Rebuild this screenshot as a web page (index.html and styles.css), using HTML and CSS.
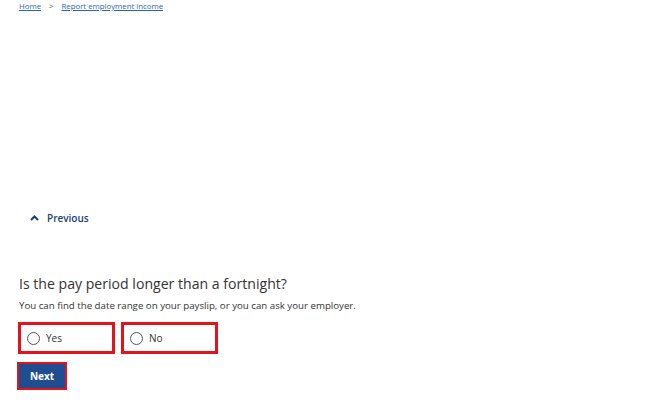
FILE: index.html
```html
<!DOCTYPE html>
<html lang="en">

<head>
    <meta charset="UTF-8">
    <meta name="viewport" content="width=device-width, initial-scale=1.0">
    <title>Report employment income</title>
    <link rel="stylesheet" href="styles.css">
</head>

<body>
    <nav class="crumbs">
        <a href="#">Home</a>
        <span class="sep">&gt;</span>
        <a href="#">Report employment income</a>
    </nav>

    <div class="prev">
        <svg width="9" height="6" viewBox="0 0 9 6"><path d="M1 5 L4.5 1.5 L8 5" fill="none" stroke="#1b3d78" stroke-width="2"/></svg>
        <span>Previous</span>
    </div>

    <form class="question">
        <h2>Is the pay period longer than a fortnight?</h2>
        <p class="hint">You can find the date range on your payslip, or you can ask your employer.</p>
        <div class="options">
            <label class="opt"><span class="dot"></span>Yes</label>
            <label class="opt"><span class="dot"></span>No</label>
        </div>
        <div class="next-wrap">
            <button type="button" class="next">Next</button>
        </div>
    </form>
</body>

</html>
```

FILE: styles.css
```css
* {
    box-sizing: border-box;
    margin: 0;
    padding: 0;
}

body {
    font-family: "Open Sans", "Noto Sans", sans-serif;
    color: #333;
    background: #fff;
    padding: 0 19px;
}

.crumbs {
    font-size: 7.8px;
    padding-top: 1px;
    height: 14px;
    display: flex;
    gap: 8px;
}

.crumbs a {
    color: #2a64b8;
}

.crumbs .sep {
    color: #555;
}

.prev {
    margin-top: 197px;
    padding-left: 11px;
    display: flex;
    align-items: center;
    gap: 8px;
    color: #1b3d78;
    font-size: 10px;
    font-weight: 600;
    height: 14px;
}

.question {
    margin-top: 49px;
}

h2 {
    font-size: 14.1px;
    font-weight: 400;
    color: #333;
    line-height: 20px;
}

.hint {
    font-size: 9.7px;
    margin-top: 5px;
    line-height: 14px;
    color: #333;
}

.options {
    display: flex;
    gap: 6px;
    margin-top: 9px;
    margin-left: -1px;
}

.opt {
    width: 97px;
    height: 32px;
    border: 3px solid #e3131b;
    display: flex;
    align-items: center;
    padding-left: 6px;
    gap: 6px;
    font-size: 10px;
    color: #333;
}

.dot {
    width: 13px;
    height: 13px;
    border: 1.5px solid #555;
    border-radius: 50%;
}

.next-wrap {
    margin-top: 8px;
    margin-left: -2px;
    display: inline-block;
    border: 2px solid #e3131b;
}

.next {
    display: block;
    width: 46px;
    height: 24px;
    border: 0;
    background: #1f4e90;
    color: #fff;
    font-family: "Open Sans", "Noto Sans", sans-serif;
    font-weight: 700;
    font-size: 10px;
}
```
